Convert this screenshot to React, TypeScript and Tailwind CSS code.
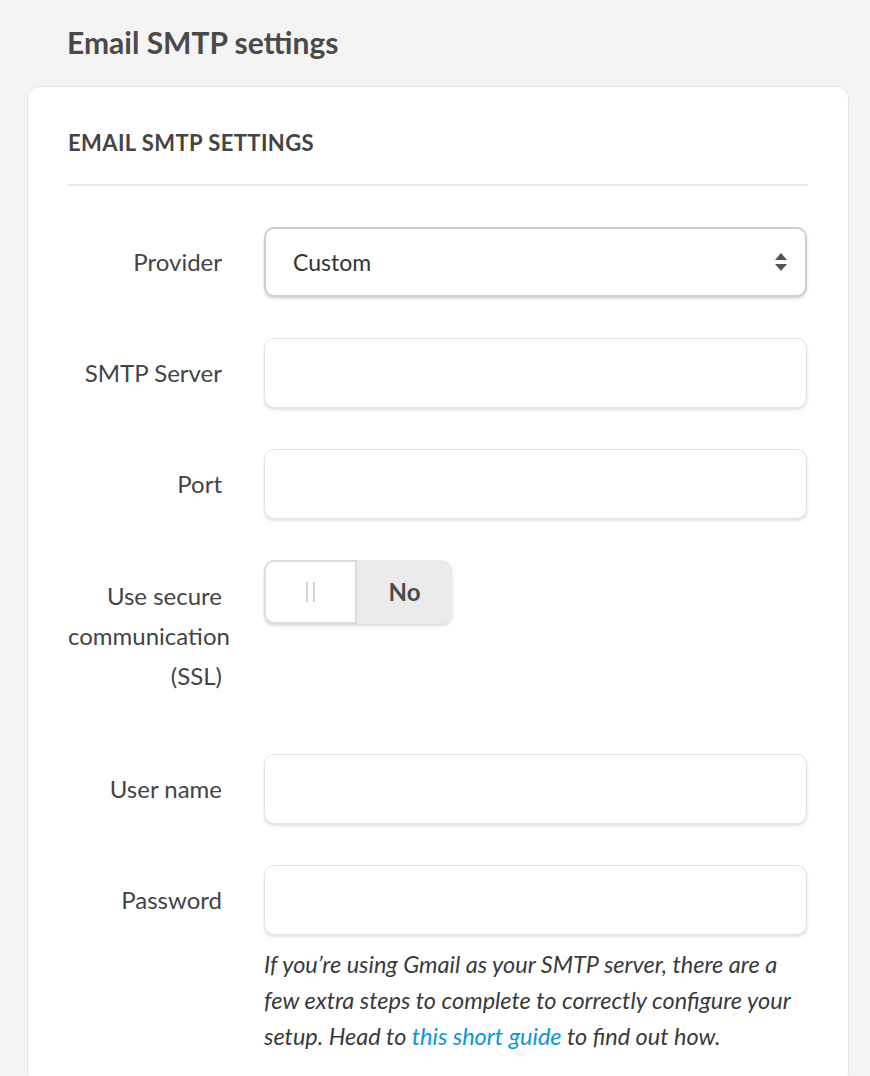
import React from "react";

const font = { fontFamily: "Lato, 'Open Sans', sans-serif" };

function Label({ children, top = false }: { children: React.ReactNode; top?: boolean }) {
  return (
    <div
      className={`w-[154px] shrink-0 text-right text-[24px] leading-[40px] text-[#444] ${top ? "pt-[16px]" : ""}`}
    >
      {children}
    </div>
  );
}

function TextInput() {
  return (
    <div className="ml-[42px] h-[70px] w-[543px] rounded-[10px] border border-[#e3e3e3] bg-white shadow-[0_2px_3px_rgba(0,0,0,0.12)]" />
  );
}

export default function App() {
  return (
    <div className="min-h-[1076px] bg-[#f4f4f4] pl-[27px] pt-[23px]" style={font}>
      <h1 className="ml-[40px] text-[30px] font-bold leading-[38px] text-[#4a4a4a]">Email SMTP settings</h1>
      <div className="mt-[25px] h-[1000px] w-[822px] rounded-[12px] border border-[#e6e6e6] bg-white px-[40px] pt-[42px]">
        <div className="text-[22px] font-bold uppercase leading-[28px] tracking-[0.4px] text-[#444]">
          Email SMTP settings
        </div>
        <div className="mt-[27px] h-[2px] bg-[#ececec]" />
        <div className="mt-[41px] flex flex-col gap-[41px]">
          <div className="flex items-center">
            <Label>Provider</Label>
            <div className="ml-[42px] flex h-[70px] w-[543px] items-center justify-between rounded-[10px] border-2 border-[#cfcfcf] bg-white pl-[27px] pr-[17px] shadow-[0_2px_3px_rgba(0,0,0,0.15)]">
              <span className="text-[23px] text-[#333]">Custom</span>
              <svg width="14" height="20" viewBox="0 0 14 20">
                <path d="M7 1 L13 8 L1 8 Z" fill="#555" />
                <path d="M1 12 L13 12 L7 19 Z" fill="#555" />
              </svg>
            </div>
          </div>
          <div className="flex items-center">
            <Label>SMTP Server</Label>
            <TextInput />
          </div>
          <div className="flex items-center">
            <Label>Port</Label>
            <TextInput />
          </div>
          <div className="flex h-[153px] items-start">
            <Label top>Use secure communication (SSL)</Label>
            <div className="ml-[42px] flex h-[64px] w-[188px] overflow-hidden rounded-[10px] bg-[#ebebeb] shadow-[0_2px_3px_rgba(0,0,0,0.15)]">
              <div className="flex w-[93px] items-center justify-center gap-[5px] rounded-l-[10px] border-2 border-[#dcdcdc] bg-white">
                <div className="h-[20px] w-[2px] bg-[#d4d4d4]" />
                <div className="h-[20px] w-[2px] bg-[#d4d4d4]" />
              </div>
              <div className="flex flex-1 items-center justify-center text-[24px] font-bold text-[#4a4a4a]">No</div>
            </div>
          </div>
          <div className="flex items-center">
            <Label>User name</Label>
            <TextInput />
          </div>
          <div className="flex flex-col">
            <div className="flex items-center">
              <Label>Password</Label>
              <TextInput />
            </div>
            <p className="ml-[196px] mt-[11px] w-[580px] text-[23.5px] italic leading-[36px] text-[#3a3a3a]">
              If you’re using Gmail as your SMTP server, there are a
              <br />
              few extra steps to complete to correctly configure your
              <br />
              setup. Head to <span className="text-[#0a96d8]">this short guide</span> to find out how.
            </p>
          </div>
        </div>
      </div>
    </div>
  );
}
